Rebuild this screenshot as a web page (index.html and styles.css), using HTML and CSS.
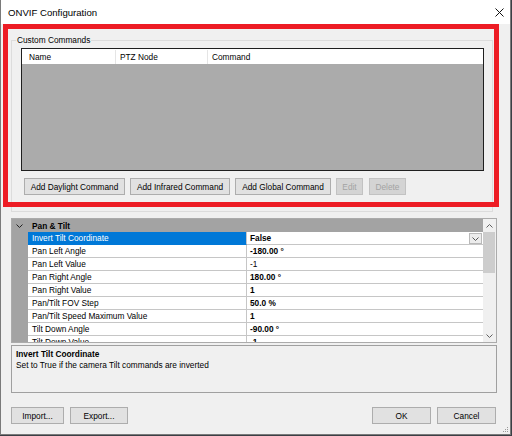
FILE: index.html
```html
<!DOCTYPE html>
<html>
<head>
<meta charset="utf-8">
<link rel="stylesheet" href="styles.css">
</head>
<body>
<div class="window">
  <div class="titlebar">
    <span class="title">ONVIF Configuration</span>
    <svg class="close" width="9" height="9" viewBox="0 0 9 9"><path d="M0.5 0.5L8.5 8.5M8.5 0.5L0.5 8.5" stroke="#111" stroke-width="1" fill="none"/></svg>
  </div>
  <div class="client">
    <div class="group">
      <div class="group-title">Custom Commands</div>
      <div class="list">
        <div class="list-header">
          <div class="col c1">Name</div>
          <div class="col c2">PTZ Node</div>
          <div class="col c3">Command</div>
        </div>
      </div>
      <div class="cmd-buttons">
        <button class="btn w-day">Add Daylight Command</button>
        <button class="btn w-ir">Add Infrared Command</button>
        <button class="btn w-glob">Add Global Command</button>
        <button class="btn disabled w-edit">Edit</button>
        <button class="btn disabled w-del">Delete</button>
      </div>
    </div>

    <div class="propgrid">
      <div class="pg-rows">
        <div class="pg-cat">
          <span class="cat-gutter"><svg width="7" height="4" viewBox="0 0 7 4"><path d="M0.5 0.5L3.5 3.5L6.5 0.5" fill="none" stroke="#222" stroke-width="1"/></svg></span>
          <span class="cat-name">Pan &amp; Tilt</span>
        </div>
        <div class="pg-row selected">
          <div class="gutter"></div>
          <div class="label">Invert Tilt Coordinate</div>
          <div class="value">False<span class="dd"><svg width="7" height="4" viewBox="0 0 7 4"><path d="M0.5 0.5L3.5 3.5L6.5 0.5" fill="none" stroke="#555" stroke-width="1"/></svg></span></div>
        </div>
        <div class="pg-row"><div class="gutter"></div><div class="label">Pan Left Angle</div><div class="value">-180.00 °</div></div>
        <div class="pg-row"><div class="gutter"></div><div class="label">Pan Left Value</div><div class="value regular">-1</div></div>
        <div class="pg-row"><div class="gutter"></div><div class="label">Pan Right Angle</div><div class="value">180.00 °</div></div>
        <div class="pg-row"><div class="gutter"></div><div class="label">Pan Right Value</div><div class="value">1</div></div>
        <div class="pg-row"><div class="gutter"></div><div class="label">Pan/Tilt FOV Step</div><div class="value">50.0 %</div></div>
        <div class="pg-row"><div class="gutter"></div><div class="label">Pan/Tilt Speed Maximum Value</div><div class="value">1</div></div>
        <div class="pg-row"><div class="gutter"></div><div class="label">Tilt Down Angle</div><div class="value">-90.00 °</div></div>
        <div class="pg-row"><div class="gutter"></div><div class="label">Tilt Down Value</div><div class="value">-1</div></div>
      </div>
      <div class="scrollbar">
        <div class="sb-btn"><svg width="7" height="4" viewBox="0 0 7 4"><path d="M0.5 3.5L3.5 0.5L6.5 3.5" fill="none" stroke="#606060" stroke-width="1"/></svg></div>
        <div class="sb-thumb"></div>
        <div class="sb-track"></div>
        <div class="sb-btn"><svg width="7" height="4" viewBox="0 0 7 4"><path d="M0.5 0.5L3.5 3.5L6.5 0.5" fill="none" stroke="#606060" stroke-width="1"/></svg></div>
      </div>
    </div>

    <div class="desc">
      <div class="desc-title">Invert Tilt Coordinate</div>
      <div class="desc-text">Set to True if the camera Tilt commands are inverted</div>
    </div>

    <div class="footer">
      <button class="btn w-imp">Import...</button>
      <button class="btn w-exp">Export...</button>
      <button class="btn w-ok">OK</button>
      <button class="btn w-cancel">Cancel</button>
    </div>
  </div>

  <svg class="grip" width="7" height="7" viewBox="0 0 7 7">
    <rect x="5" y="1" width="1" height="1" fill="#9a9a9a"/>
    <rect x="3" y="3" width="1" height="1" fill="#9a9a9a"/>
    <rect x="5" y="3" width="1" height="1" fill="#9a9a9a"/>
    <rect x="1" y="5" width="1" height="1" fill="#9a9a9a"/>
    <rect x="3" y="5" width="1" height="1" fill="#9a9a9a"/>
    <rect x="5" y="5" width="1" height="1" fill="#9a9a9a"/>
  </svg>
  <div class="highlight"></div>
</div>
</body>
</html>
```

FILE: styles.css
```css
* { box-sizing: border-box; }
html, body { margin: 0; padding: 0; }
body {
  width: 512px;
  height: 436px;
  background: #3b3f45;
  font-family: "Liberation Sans", Arial, sans-serif;
  font-size: 8.3px;
  color: #000;
  overflow: hidden;
}
.window {
  position: relative;
  width: 511px;
  height: 435px;
  background: #f0f0f0;
  border: 1px solid #7a7a7a;
  border-top: none;
  display: flex;
  flex-direction: column;
}
.titlebar {
  height: 24px;
  background: #fff;
  display: flex;
  align-items: center;
  padding: 1px 6px 0 7px;
}
.title { flex: 1; font-size: 9.6px; }
.close { display: block; }
.client { display: flex; flex-direction: column; }

.group {
  margin: 16px 0 0 10px;
  width: 482px;
  border: 1px solid #dcdcdc;
  padding: 0 8px 16px 9px;
}
.group-title {
  width: fit-content;
  margin: -6px 0 0 -5px;
  padding: 0 1px;
  background: #f0f0f0;
  line-height: 11px;
}
.list {
  margin-top: 2px;
  height: 123px;
  border: 1px solid #1f1f1f;
  background: #ababab;
}
.list-header {
  display: flex;
  height: 15px;
  background: #fff;
  line-height: 15px;
  padding-top: 1px;
}
.col { border-right: 1px solid #e5e5e5; height: 14px; }
.c1 { width: 94px; padding-left: 7px; }
.c2 { width: 92px; padding-left: 4px; }
.c3 { padding-left: 4px; border-right: none; }

.cmd-buttons {
  display: flex;
  gap: 5px;
  margin: 7px 0 0 3px;
}
.btn {
  appearance: none;
  -webkit-appearance: none;
  margin: 0;
  height: 17px;
  padding: 0;
  background: #e1e1e1;
  border: 1px solid #adadad;
  border-radius: 0;
  font-family: inherit;
  font-size: 8.3px;
  color: #000;
  display: flex;
  align-items: center;
  justify-content: center;
}
.btn.disabled { background: #d4d4d4; border-color: #c2c2c2; color: #a3a3a3; }
.w-day { width: 101px; }
.w-ir { width: 100px; }
.w-glob { width: 96px; }
.w-edit { width: 27px; }
.w-del { width: 37px; margin-left: 1px; }

.propgrid {
  margin: 6px 0 0 10px;
  width: 486px;
  height: 125px;
  border: 1px solid #ababab;
  display: flex;
  background: #fff;
}
.pg-rows { width: 471px; overflow: hidden; }
.pg-cat {
  height: 13px;
  background: #a3a3a3;
  display: flex;
  align-items: center;
  font-weight: bold;
}
.cat-gutter {
  width: 16px;
  display: flex;
  justify-content: center;
  padding-right: 2px;
}
.cat-gutter svg { display: block; }
.cat-name { padding-left: 4px; }
.pg-row { display: flex; height: 13px; line-height: 12px; }
.gutter { width: 16px; background: #a3a3a3; }
.label {
  width: 219px;
  padding-left: 4px;
  border-bottom: 1px solid #c6c6c6;
  border-right: 1px solid #c6c6c6;
  white-space: nowrap;
}
.value {
  flex: 1;
  padding-left: 3px;
  border-bottom: 1px solid #c6c6c6;
  font-weight: bold;
  display: flex;
  align-items: flex-start;
}
.value.regular { font-weight: normal; }
.selected .label { background: #0078d7; color: #fff; border-bottom-color: #0078d7; }
.dd {
  margin: 1px 1px 0 auto;
  width: 13px;
  height: 11px;
  border: 1px solid #b9b9b9;
  background: #ececec;
  display: flex;
  align-items: center;
  justify-content: center;
}
.dd svg { display: block; }

.scrollbar {
  width: 13px;
  background: #f0f0f0;
  display: flex;
  flex-direction: column;
}
.sb-btn {
  height: 13px;
  display: flex;
  align-items: center;
  justify-content: center;
}
.sb-btn svg { display: block; }
.sb-thumb { height: 41px; margin: 0 1px 0 0; background: #cdcdcd; }
.sb-track { flex: 1; }

.desc {
  margin: 2px 0 0 10px;
  width: 486px;
  height: 48px;
  border: 1px solid #a0a0a0;
  padding: 3px 4px;
  line-height: 11px;
}
.desc-title { font-weight: bold; }

.footer {
  display: flex;
  margin: 14px 0 0 10px;
  padding-right: 14px;
  gap: 6px;
}
.w-imp { width: 53px; }
.w-exp { width: 58px; }
.w-ok { width: 59px; margin-left: auto; }
.w-cancel { width: 59px; }

.grip { position: absolute; right: 1px; bottom: 1px; }
.highlight {
  position: absolute;
  left: 2px;
  top: 24px;
  width: 496px;
  height: 183px;
  border: 5px solid #ed1c24;
}
```
